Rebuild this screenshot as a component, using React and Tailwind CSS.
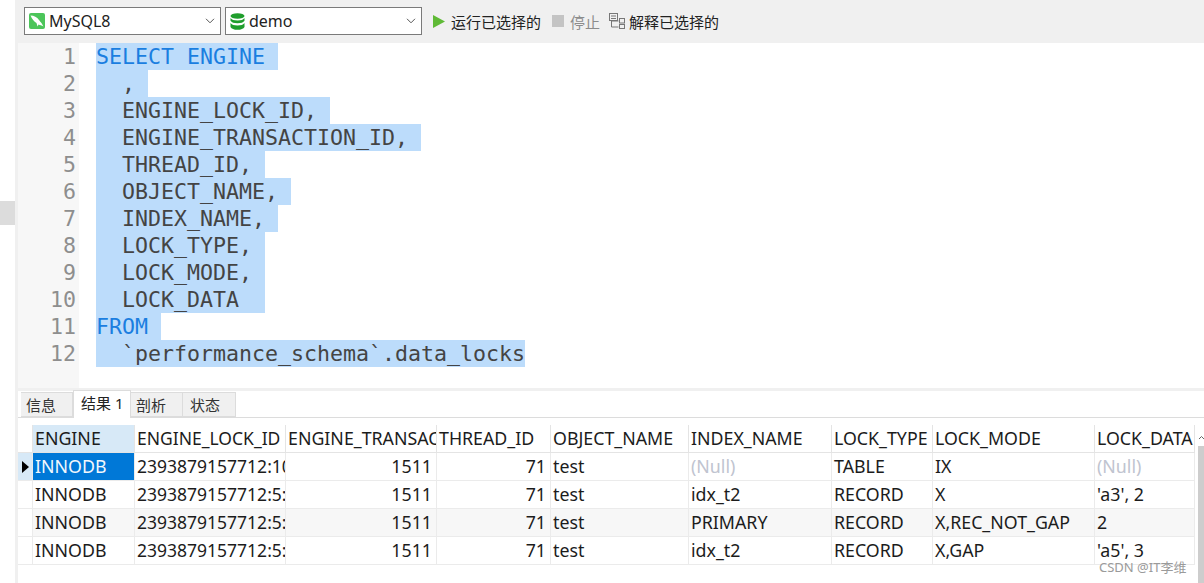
import React from 'react';

const sql = [
  { text: 'SELECT ENGINE', keyword: true, pad: 'w-[182px]' },
  { text: '  ,', pad: 'w-[52px]' },
  { text: '  ENGINE_LOCK_ID,', pad: 'w-[234px]' },
  { text: '  ENGINE_TRANSACTION_ID,', pad: 'w-[325px]' },
  { text: '  THREAD_ID,', pad: 'w-[169px]' },
  { text: '  OBJECT_NAME,', pad: 'w-[195px]' },
  { text: '  INDEX_NAME,', pad: 'w-[182px]' },
  { text: '  LOCK_TYPE,', pad: 'w-[169px]' },
  { text: '  LOCK_MODE,', pad: 'w-[169px]' },
  { text: '  LOCK_DATA', pad: 'w-[169px]' },
  { text: 'FROM', keyword: true, pad: 'w-[65px]' },
  { text: '  `performance_schema`.data_locks', pad: 'w-[429px]' },
];

const columns = ['ENGINE', 'ENGINE_LOCK_ID', 'ENGINE_TRANSACTION_ID', 'THREAD_ID', 'OBJECT_NAME', 'INDEX_NAME', 'LOCK_TYPE', 'LOCK_MODE', 'LOCK_DATA'];

const rows = [
  ['INNODB', '2393879157712:1066', '1511', '71', 'test', '(Null)', 'TABLE', 'IX', '(Null)'],
  ['INNODB', '2393879157712:5:4', '1511', '71', 'test', 'idx_t2', 'RECORD', 'X', "'a3', 2"],
  ['INNODB', '2393879157712:5:5', '1511', '71', 'test', 'PRIMARY', 'RECORD', 'X,REC_NOT_GAP', '2'],
  ['INNODB', '2393879157712:5:6', '1511', '71', 'test', 'idx_t2', 'RECORD', 'X,GAP', "'a5', 3"],
];

const MysqlIcon = () => (
  <svg width="16" height="16" viewBox="0 0 16 16" className="shrink-0">
    <rect width="16" height="16" rx="2" fill="#4cc55a" />
    <path d="M1.500 2.500 C5 2.500 8 4 10 7 C11 8.500 12.500 9.500 14.500 13.500 C12.500 12.500 11 12 9.500 11.500 L8.500 13.500 L7.500 10 C5 8.500 3 6 1.500 2.500 Z" fill="#fff" />
  </svg>
);

const DbIcon = () => (
  <svg width="15" height="17" viewBox="0 0 15 17" className="shrink-0">
    <ellipse cx="7.500" cy="3" rx="7" ry="2.800" fill="#1f9e2c" />
    <path d="M.5 5c1 1.700 3.500 2.500 7 2.500s6-.8 7-2.500v2.800c-1 1.700-3.500 2.500-7 2.500s-6-.8-7-2.500z" fill="#1f9e2c" />
    <path d="M.5 10c1 1.700 3.500 2.500 7 2.500s6-.8 7-2.500v4c-1 1.900-3.500 2.800-7 2.800s-6-.9-7-2.800z" fill="#1f9e2c" />
  </svg>
);

const Chevron = () => (
  <svg width="10" height="6" viewBox="0 0 10 6" fill="none" stroke="#555" strokeWidth="1" className="shrink-0">
    <path d="M1 .8 5 4.800 9 .8" />
  </svg>
);

const ExplainIcon = () => (
  <svg width="16" height="16" viewBox="0 0 16 16" fill="none" stroke="#777" strokeWidth="1" className="shrink-0">
    <rect x=".5" y=".5" width="8" height="7" />
    <path d="M2 3h5M2 5.500h5" />
    <path d="M2.500 7.500v6.500h7M2.500 8h7" />
    <rect x="10.500" y="5.500" width="5" height="4.500" />
    <rect x="10.500" y="11.500" width="5" height="4" />
  </svg>
);

function Select({ icon, label, width }) {
  return (
    <div className={`${width} h-[28px] flex items-center bg-white border border-[#7a7a7a] pl-[4px] pr-[5px]`}>
      {icon}
      <span className="ml-[4px] flex-1 text-[16px] text-[#222]">{label}</span>
      <Chevron />
    </div>
  );
}

function Tab({ label, active, width }) {
  if (active) {
    return (
      <div className={`${width} h-[28px] -mb-px pb-[2px] flex items-center bg-white border border-[#dcdcdc] border-b-0 text-[15px] text-[#222]`}>
        {label}
      </div>
    );
  }
  return (
    <div className={`${width} h-[25px] pt-[2px] flex items-center bg-[#f0f0f0] border border-[#dcdcdc] border-l-0 text-[15px] text-[#333]`}>
      {label}
    </div>
  );
}

function Cell({ value, col, row }) {
  const numeric = col === 2 || col === 3;
  const isNull = value === '(Null)';
  const selected = row === 0 && col === 0;
  let color = 'text-[#1c1c1c]';
  if (isNull) color = 'text-[#c0c4d0]';
  if (selected) color = 'text-[#f2f7fc]';
  return (
    <div className={`h-[28px] overflow-hidden whitespace-nowrap border-b border-r border-[#ebebeb] leading-[26px] ${col === 1 ? 'text-[17.5px]' : 'text-[17.8px]'} ${numeric ? 'text-right pr-[4px]' : 'pl-[2px]'} ${selected ? 'bg-[#0078d7]' : ''} ${color}`}>
      {value}
    </div>
  );
}

export default function App() {
  return (
    <div className="relative w-[1204px] h-[583px] overflow-hidden flex bg-white font-['Noto_Sans','Noto_Sans_CJK_SC',sans-serif]">
      {/* tira izquierda con el asa */}
      <div className="w-[15px] pt-[201px] shrink-0">
        <div className="h-[24px] bg-[#dcdcdc]" />
      </div>
      <div className="flex-1 min-w-0 border-l-[3px] border-[#f0f0f0] flex flex-col">
        <div className="h-[43px] shrink-0 bg-[#f0f0f0] flex items-center pl-[6px] pb-[1px]">
          <Select icon={<MysqlIcon />} label="MySQL8" width="w-[197px]" />
          <div className="w-[4px]" />
          <Select icon={<DbIcon />} label="demo" width="w-[197px]" />
          <svg width="12" height="13" viewBox="0 0 12 13" className="ml-[11px] shrink-0">
            <path d="M0 0 12 6.500 0 13z" fill="#5fba36" />
          </svg>
          <span className="ml-[6px] mt-[2px] text-[15px] text-[#222]">运行已选择的</span>
          <div className="ml-[11px] w-[12px] h-[12px] bg-[#c4c4c4]" />
          <span className="ml-[6px] mt-[2px] text-[15px] text-[#8c8c8c]">停止</span>
          <div className="ml-[9px]"><ExplainIcon /></div>
          <span className="ml-[4px] mt-[2px] text-[15px] text-[#222]">解释已选择的</span>
        </div>

        <div className="h-[345px] shrink-0 flex">
          <div className="w-[61px] shrink-0 bg-[#f7f7f7] font-['DejaVu_Sans_Mono',monospace] text-[21.6px] leading-[27px] text-[#8e8e8e] text-right pr-[3px]">
            {sql.map((_, i) => <div key={i} className="h-[27px]">{i + 1}</div>)}
          </div>
          <div className="flex-1 pl-[17px] font-['DejaVu_Sans_Mono',monospace] text-[21.6px] leading-[27px]">
            {sql.map((line, i) => (
              <div key={i} className={`${line.pad} h-[27px] bg-[#bcdcfb] whitespace-pre ${line.keyword ? 'text-[#1a7ee0]' : 'text-[#444]'}`}>
                {line.text}
              </div>
            ))}
          </div>
        </div>

        <div className="h-[3px] shrink-0 bg-[#f0f0f0]" />

        <div className="h-[27px] shrink-0 flex items-end pl-[3px] border-b border-[#dcdcdc]">
          <Tab label="信息" width="w-[52px] border-l pl-[5px]" />
          <Tab label="结果 1" active width="w-[58px] pl-[7px]" />
          <Tab label="剖析" width="w-[52px] pl-[5px]" />
          <Tab label="状态" width="w-[53px] pl-[7px]" />
        </div>

        <div className="flex-1 flex min-h-0">
          <div className="w-[1177px] shrink-0 pt-[7px]">
            <div className="grid grid-cols-[15px_102px_151px_151px_114px_138px_143px_101px_162px_100px]">
              <div className="h-[28px] border-b border-r border-[#e4e4e4]" />
              {columns.map((name, i) => (
                <div key={name} className={`h-[28px] overflow-hidden whitespace-nowrap border-b border-r border-[#e4e4e4] pl-[2px] leading-[26px] text-[#1c1c1c] ${i === 1 ? 'text-[17.5px]' : 'text-[17.8px]'} ${i === 0 ? 'bg-[#d7e9f7]' : ''}`}>
                  {name}
                </div>
              ))}
              {rows.map((row, r) => (
                <div key={r} className="contents">
                  <div className={`h-[28px] flex items-center justify-end border-b border-r border-[#ebebeb] pr-[3px] ${r === 0 ? 'bg-[#d7e9f7]' : ''}`}>
                    {r === 0 && (
                      <svg width="7" height="12" viewBox="0 0 7 12"><path d="M0 0 7 6 0 12z" fill="#000" /></svg>
                    )}
                  </div>
                  {row.map((value, c) => (
                    <div key={c} className={r === 2 ? 'bg-[#f7f7f7]' : ''}>
                      <Cell value={value} col={c} row={r} />
                    </div>
                  ))}
                </div>
              ))}
            </div>
          </div>
          <div className="ml-[3px] w-[6px] shrink-0 flex flex-col">
            <div className="h-[28px] pt-[18px] flex justify-center items-start">
              <svg width="5" height="3" viewBox="0 0 5 3" fill="none" stroke="#666" strokeWidth="1"><path d="M0 3 2.500.5 5 3" /></svg>
            </div>
            <div className="flex-1 bg-[#cdcdcd]" />
          </div>
        </div>
      </div>
      <div className="absolute left-[1099px] top-[558px] text-[13px] text-[#9a9a9a]">CSDN @IT李维</div>
    </div>
  );
}
